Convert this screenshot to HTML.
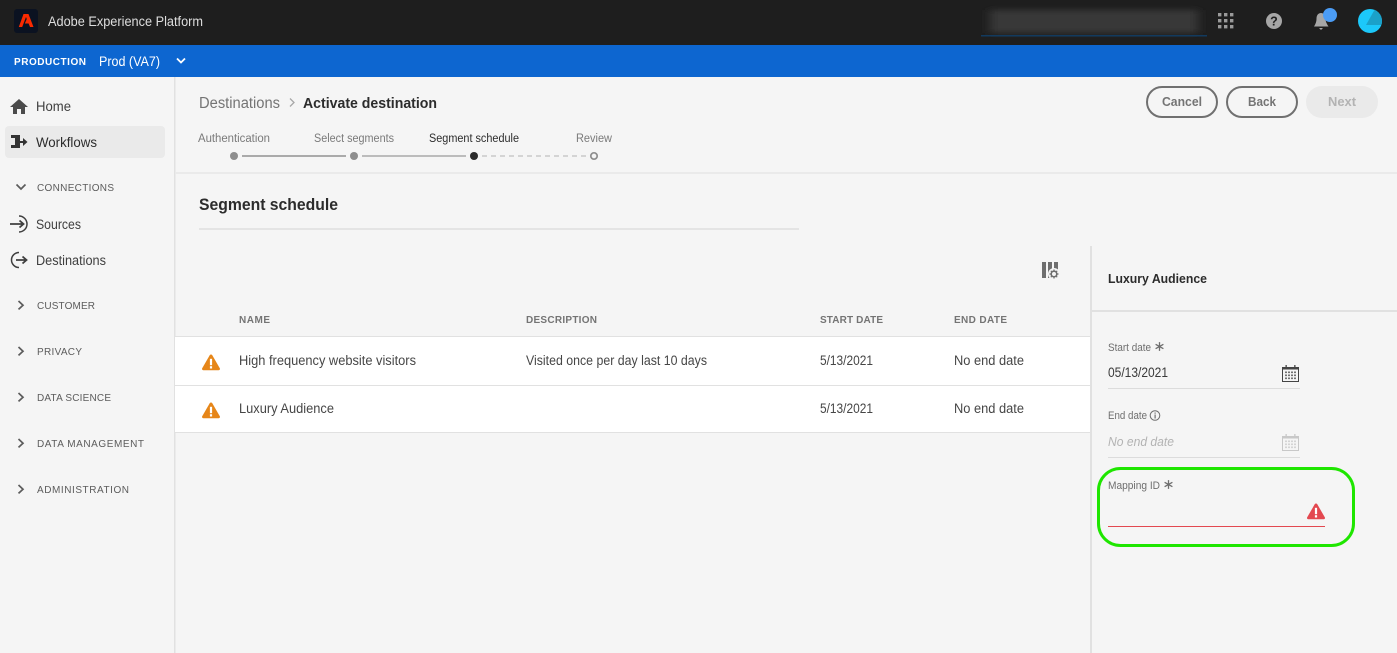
<!DOCTYPE html>
<html lang="en">
<head>
<meta charset="utf-8">
<title>Activate destination</title>
<style>
html,body{margin:0;padding:0;background:#f5f5f5;width:1397px;height:653px;overflow:hidden}
svg{display:block}
text{font-family:"Liberation Sans",sans-serif;}
.nav{font-size:13.5px;fill:#3f3f3f}
.sec{font-size:10px;fill:#5c5c5c}
.th{font-size:10px;font-weight:bold;fill:#747474}
.td{font-size:13.5px;fill:#464646}
.step{font-size:11.5px;fill:#7a7a7a}
.lab{font-size:11px;fill:#6e6e6e}
.btn{font-size:13px;font-weight:bold;fill:#747474}
</style>
</head>
<body>
<svg width="1397" height="653" viewBox="0 0 1397 653" xmlns="http://www.w3.org/2000/svg">
<defs>
<filter id="b" x="-10%" y="-60%" width="120%" height="220%"><feGaussianBlur stdDeviation="5 3"/></filter>
<clipPath id="av"><circle cx="1370" cy="21" r="12"/></clipPath>
<g id="warn"><path d="M9 0.5 C9.6 0.5 10 0.8 10.3 1.3 L17.8 14.3 C18.3 15.2 17.8 16.2 16.7 16.2 L1.3 16.2 C0.2 16.2 -0.3 15.2 0.2 14.3 L7.700 1.3 C8 0.8 8.4 0.5 9 0.5Z"/><rect x="7.900" y="4.800" width="2.200" height="6.400" fill="#fff"/><rect x="7.900" y="12.200" width="2.200" height="2.300" fill="#fff"/></g>
<g id="cal"><path d="M0.5 2.5H16.5V16.5H0.5Z" fill="none" stroke="currentColor" stroke-width="1"/><rect x="0.5" y="2.5" width="16" height="2" fill="currentColor"/><rect x="3.5" y="0" width="1.300" height="3" fill="currentColor"/><rect x="12.200" y="0" width="1.300" height="3" fill="currentColor"/><path d="M3 6.500h2v1.600H3zM6 6.500h2v1.600H6zM9 6.500h2v1.600H9zM12 6.500h2v1.600h-2zM3 9.500h2v1.600H3zM6 9.500h2v1.600H6zM9 9.500h2v1.600H9zM12 9.500h2v1.600h-2zM3 12.500h2v1.600H3zM6 12.500h2v1.600H6zM9 12.500h2v1.600H9zM12 12.500h2v1.600h-2z" fill="currentColor" opacity=".75"/></g>
<path id="chev" d="M-2.500 -4 L2 0.200 L-2.500 4.400" fill="none" stroke="#5c5c5c" stroke-width="1.700"/>
<path id="ast" d="M0 -4.400V4.400M-3.900 -2.200L3.900 2.200M-3.900 2.200L3.900 -2.200" fill="none" stroke="#6e6e6e" stroke-width="1.300"/>
</defs>

<rect width="1397" height="653" fill="#f5f5f5"/>

<!-- top bar -->
<rect width="1397" height="45" fill="#1e1e1e"/>
<rect x="14" y="9" width="24" height="24" rx="3" fill="#0b1221"/>
<path d="M23.500 14H28.500L33.500 27H30L28.600 23.500H24.800L26.800 19L26 17L22.200 27H18.800Z" fill="#fa2a00"/>
<text x="48" y="26" font-size="13.500" fill="#dedede" textLength="155" lengthAdjust="spacingAndGlyphs">Adobe Experience Platform</text>

<g filter="url(#b)" fill="#383838"><rect x="990" y="10" width="208" height="23"/></g>
<rect x="981" y="35" width="226" height="1.500" fill="#123a5e"/>

<g fill="#9a9a9a">
<rect x="1218" y="13" width="3.400" height="3.400"/><rect x="1224" y="13" width="3.400" height="3.400"/><rect x="1230" y="13" width="3.400" height="3.400"/>
<rect x="1218" y="19" width="3.400" height="3.400"/><rect x="1224" y="19" width="3.400" height="3.400"/><rect x="1230" y="19" width="3.400" height="3.400"/>
<rect x="1218" y="25" width="3.400" height="3.400"/><rect x="1224" y="25" width="3.400" height="3.400"/><rect x="1230" y="25" width="3.400" height="3.400"/>
</g>
<circle cx="1274" cy="21" r="8" fill="#a6a6a6"/>
<text x="1274" y="25.500" font-size="12.500" font-weight="bold" text-anchor="middle" fill="#1e1e1e">?</text>
<path d="M1321 13C1324 13 1325.500 15.500 1325.500 18.500C1325.500 22 1327 24 1328.500 26.500H1314C1315.500 24 1316.500 22 1316.500 18.500C1316.500 15.500 1318 13 1321 13ZM1319 28H1323L1321 30Z" fill="#a6a6a6"/>
<circle cx="1330" cy="15" r="7" fill="#4b9cf5"/>
<circle cx="1370" cy="21" r="12" fill="#1cc8fa"/>
<path d="M1375 9L1366 25H1384V9Z" fill="#1ba1c9" clip-path="url(#av)"/>

<!-- blue bar -->
<rect y="45" width="1397" height="32" fill="#0d66d0"/>
<text x="14" y="65" font-size="10" font-weight="bold" fill="#fff" textLength="72" lengthAdjust="spacing">PRODUCTION</text>
<text x="99" y="66" font-size="13.500" fill="#fff" textLength="61" lengthAdjust="spacingAndGlyphs">Prod (VA7)</text>
<path d="M177 58.500L181 62.500L185 58.500" fill="none" stroke="#fff" stroke-width="1.800"/>

<!-- sidebar -->
<rect x="174" y="77" width="1.500" height="576" fill="#e1e1e1"/>
<path d="M19 99L28 107H25V114H21V109H17V114H13V107H10Z" fill="#4b4b4b"/>
<text class="nav" x="36" y="111" textLength="35" lengthAdjust="spacingAndGlyphs">Home</text>
<rect x="5" y="126" width="160" height="32" rx="4" fill="#eaeaea"/>
<path d="M11 135H20V141H23V138L27.500 142L23 146V143H20V148H11V145H15V138H11Z" fill="#333"/>
<text class="nav" x="36" y="147" textLength="61" lengthAdjust="spacingAndGlyphs" style="fill:#2c2c2c">Workflows</text>

<path d="M16.500 184.500L21 189L25.500 184.500" fill="none" stroke="#5c5c5c" stroke-width="1.700"/>
<text class="sec" x="37" y="191" textLength="77" lengthAdjust="spacing">CONNECTIONS</text>
<path d="M10 224H23M19.500 220.500L23.500 224L19.500 227.500" fill="none" stroke="#3f3f3f" stroke-width="1.800"/>
<path d="M19 216A8 8 0 0 1 19 232" fill="none" stroke="#3f3f3f" stroke-width="1.500"/>
<text class="nav" x="36" y="229" textLength="45" lengthAdjust="spacingAndGlyphs">Sources</text>
<path d="M19 252.500A7.500 7.500 0 0 0 19 267.500" fill="none" stroke="#3f3f3f" stroke-width="1.500"/>
<path d="M16 260H26M22.500 256.500L26.500 260L22.500 263.500" fill="none" stroke="#3f3f3f" stroke-width="1.800"/>
<text class="nav" x="36" y="265" textLength="70" lengthAdjust="spacingAndGlyphs">Destinations</text>

<use href="#chev" x="21" y="305"/>
<text class="sec" x="37" y="309" textLength="58" lengthAdjust="spacing">CUSTOMER</text>
<use href="#chev" x="21" y="351"/>
<text class="sec" x="37" y="355" textLength="45" lengthAdjust="spacing">PRIVACY</text>
<use href="#chev" x="21" y="397"/>
<text class="sec" x="37" y="401" textLength="74" lengthAdjust="spacing">DATA SCIENCE</text>
<use href="#chev" x="21" y="443"/>
<text class="sec" x="37" y="447" textLength="107" lengthAdjust="spacing">DATA MANAGEMENT</text>
<use href="#chev" x="21" y="489"/>
<text class="sec" x="37" y="493" textLength="92" lengthAdjust="spacing">ADMINISTRATION</text>

<!-- breadcrumb -->
<text x="199" y="108" font-size="15.500" fill="#747474" textLength="81" lengthAdjust="spacingAndGlyphs">Destinations</text>
<path d="M290 98.500L294 102.500L290 106.500" fill="none" stroke="#a8a8a8" stroke-width="1.300"/>
<text x="303" y="108" font-size="15" font-weight="bold" fill="#2c2c2c" textLength="134" lengthAdjust="spacingAndGlyphs">Activate destination</text>

<!-- buttons -->
<rect x="1147" y="87" width="70" height="30" rx="15" fill="#f5f5f5" stroke="#707070" stroke-width="2"/>
<text class="btn" x="1162" y="106" textLength="40" lengthAdjust="spacingAndGlyphs">Cancel</text>
<rect x="1227" y="87" width="70" height="30" rx="15" fill="#f5f5f5" stroke="#707070" stroke-width="2"/>
<text class="btn" x="1248" y="106" textLength="28" lengthAdjust="spacingAndGlyphs">Back</text>
<rect x="1306" y="86" width="72" height="32" rx="16" fill="#eaeaea"/>
<text class="btn" x="1328" y="106" textLength="28" lengthAdjust="spacingAndGlyphs" style="fill:#b3b3b3">Next</text>

<!-- steps -->
<text class="step" x="198" y="142" textLength="72" lengthAdjust="spacingAndGlyphs">Authentication</text>
<text class="step" x="314" y="142" textLength="80" lengthAdjust="spacingAndGlyphs">Select segments</text>
<text class="step" x="429" y="142" textLength="90" lengthAdjust="spacingAndGlyphs" style="fill:#2c2c2c">Segment schedule</text>
<text class="step" x="576" y="142" textLength="36" lengthAdjust="spacingAndGlyphs">Review</text>
<rect x="242" y="155" width="104" height="2" fill="#aaaaaa"/>
<rect x="362" y="155" width="104" height="2" fill="#bcbcbc"/>
<path d="M482 156H586" stroke="#d4d4d4" stroke-width="2" stroke-dasharray="5 4"/>
<circle cx="234" cy="156" r="4" fill="#8e8e8e"/>
<circle cx="354" cy="156" r="4" fill="#8e8e8e"/>
<circle cx="474" cy="156" r="4" fill="#2c2c2c"/>
<circle cx="594" cy="156" r="3.200" fill="#f5f5f5" stroke="#8e8e8e" stroke-width="1.700"/>

<rect x="175" y="172" width="1222" height="2" fill="#eaeaea"/>

<text x="199" y="210" font-size="17" font-weight="bold" fill="#2c2c2c" textLength="139" lengthAdjust="spacingAndGlyphs">Segment schedule</text>
<rect x="199" y="228" width="600" height="2" fill="#e4e4e4"/>

<!-- right panel divider -->
<rect x="1090" y="246" width="2" height="407" fill="#e1e1e1"/>

<!-- column icon -->
<rect x="1042" y="262" width="4" height="16" fill="#6e6e6e"/>
<rect x="1048" y="262" width="4" height="16" fill="#6e6e6e"/>
<rect x="1054" y="262" width="4" height="16" fill="#6e6e6e"/>
<circle cx="1054" cy="274" r="6" fill="#f5f5f5"/>
<circle cx="1054" cy="274" r="2.800" fill="none" stroke="#6e6e6e" stroke-width="1.600"/>
<path d="M1054 269.500V271M1054 277V278.500M1049.500 274H1051M1057 274H1058.500M1050.800 270.800L1052 272M1056 276L1057.200 277.200M1050.800 277.200L1052 276M1056 272L1057.200 270.800" stroke="#6e6e6e" stroke-width="1.200"/>

<!-- table -->
<text class="th" x="239" y="323" textLength="31" lengthAdjust="spacing">NAME</text>
<text class="th" x="526" y="323" textLength="71" lengthAdjust="spacing">DESCRIPTION</text>
<text class="th" x="820" y="323" textLength="63" lengthAdjust="spacing">START DATE</text>
<text class="th" x="954" y="323" textLength="53" lengthAdjust="spacing">END DATE</text>
<rect x="175" y="336" width="915" height="97" fill="#fff"/>
<rect x="175" y="336" width="915" height="1" fill="#e1e1e1"/>
<rect x="175" y="385" width="915" height="1" fill="#e1e1e1"/>
<rect x="175" y="432" width="915" height="1" fill="#e1e1e1"/>
<use href="#warn" x="202" y="354" fill="#e68619"/>
<text class="td" x="239" y="365" textLength="177" lengthAdjust="spacingAndGlyphs">High frequency website visitors</text>
<text class="td" x="526" y="365" textLength="181" lengthAdjust="spacingAndGlyphs">Visited once per day last 10 days</text>
<text class="td" x="820" y="365" textLength="53" lengthAdjust="spacingAndGlyphs">5/13/2021</text>
<text class="td" x="954" y="365" textLength="70" lengthAdjust="spacingAndGlyphs">No end date</text>
<use href="#warn" x="202" y="402" fill="#e68619"/>
<text class="td" x="239" y="413" textLength="95" lengthAdjust="spacingAndGlyphs">Luxury Audience</text>
<text class="td" x="820" y="413" textLength="53" lengthAdjust="spacingAndGlyphs">5/13/2021</text>
<text class="td" x="954" y="413" textLength="70" lengthAdjust="spacingAndGlyphs">No end date</text>

<!-- panel -->
<text x="1108" y="283" font-size="13" font-weight="bold" fill="#2c2c2c" textLength="99" lengthAdjust="spacingAndGlyphs">Luxury Audience</text>
<rect x="1092" y="310" width="305" height="2" fill="#e1e1e1"/>

<text class="lab" x="1108" y="351" textLength="43" lengthAdjust="spacingAndGlyphs">Start date</text>
<use href="#ast" x="1159.500" y="346.500"/>
<text x="1108" y="377" font-size="13.500" fill="#3a3a3a" textLength="60" lengthAdjust="spacingAndGlyphs">05/13/2021</text>
<rect x="1108" y="388" width="192" height="1" fill="#dcdcdc"/>
<use href="#cal" x="1282" y="365" style="color:#444"/>

<text class="lab" x="1108" y="419" textLength="39" lengthAdjust="spacingAndGlyphs">End date</text>
<circle cx="1155" cy="415.500" r="4.800" fill="none" stroke="#6e6e6e" stroke-width="1"/>
<rect x="1154.500" y="412.500" width="1.200" height="1.200" fill="#6e6e6e"/>
<rect x="1154.500" y="414.500" width="1.200" height="4" fill="#6e6e6e"/>
<text x="1108" y="446" font-size="12.500" font-style="italic" fill="#b3b3b3" textLength="66" lengthAdjust="spacingAndGlyphs">No end date</text>
<rect x="1108" y="457" width="192" height="1" fill="#dcdcdc"/>
<use href="#cal" x="1282" y="434" style="color:#c8c8c8"/>

<text class="lab" x="1108" y="489" textLength="52" lengthAdjust="spacingAndGlyphs">Mapping ID</text>
<use href="#ast" x="1168.500" y="484.500"/>
<rect x="1108" y="526" width="217" height="1" fill="#e34850"/>
<use href="#warn" x="1307" y="503" fill="#e34850"/>

<rect x="1098.500" y="468.500" width="255" height="77" rx="22" fill="none" stroke="#1fe600" stroke-width="3"/>
</svg>
</body>
</html>
